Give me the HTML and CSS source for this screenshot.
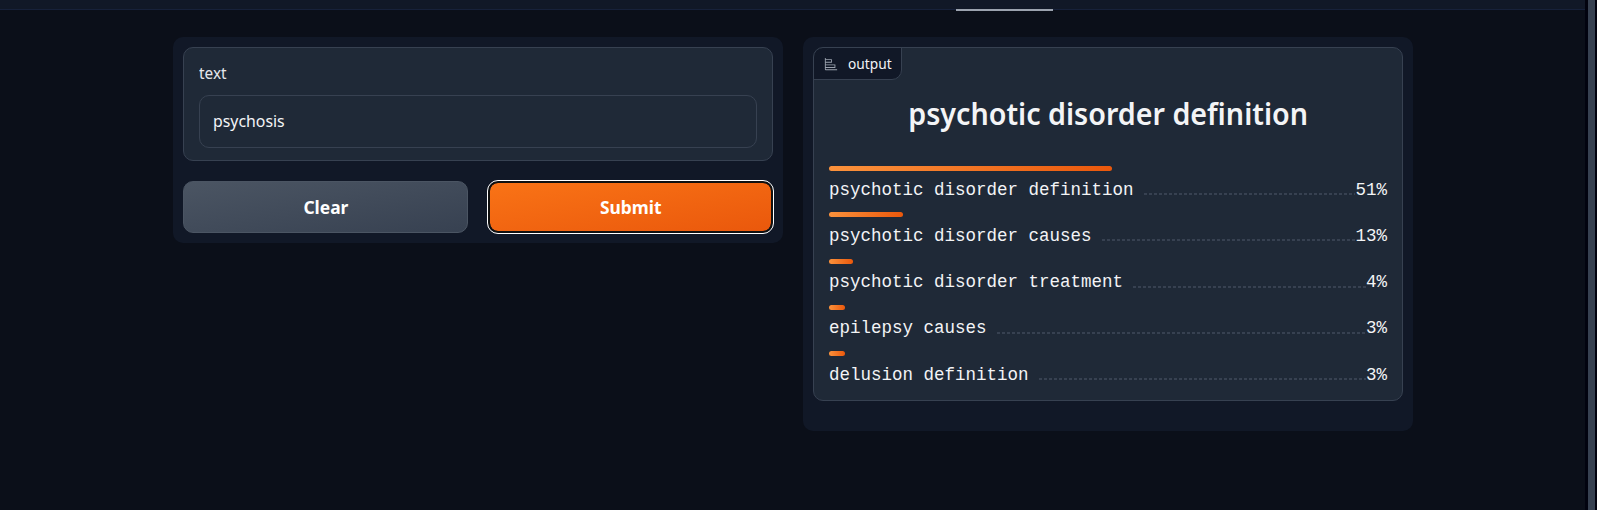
FILE: index.html
```
<!DOCTYPE html>
<html lang="en">
<head>
<meta charset="utf-8">
<title>Text classification</title>
<link rel="stylesheet" href="styles.css">
</head>
<body>
<div class="page">
  <header class="topbar"><span class="active-tab"></span></header>
  <main class="columns">
    <section class="panel">
      <div class="block field">
        <label class="label" for="text"><span class="fit">text</span></label>
        <div class="input" id="text"><span class="fit">psychosis</span></div>
      </div>
      <div class="actions">
        <button class="btn clear"><span class="fit">Clear</span></button>
        <button class="btn submit"><span class="fit">Submit</span></button>
      </div>
    </section>
    <section class="panel result">
      <div class="block output">
        <div class="tag">
          <svg class="icon" viewBox="0 0 32 32"><path fill="currentColor" d="M4 2H2v26a2 2 0 0 0 2 2h26v-2H4v-3h22v-8H4v-4h14V5H4Zm20 17v4H4v-4ZM16 7v4H4V7Z"/></svg>
          <span class="fit">output</span>
        </div>
        <h2 class="title"><span class="fit">psychotic disorder definition</span></h2>
        <div class="rows">
          <div class="row"><div class="bar" style="width:283px"></div><div class="line"><span>psychotic disorder definition</span><i class="dots"></i><span>51%</span></div></div>
          <div class="row"><div class="bar" style="width:74px"></div><div class="line"><span>psychotic disorder causes</span><i class="dots"></i><span>13%</span></div></div>
          <div class="row"><div class="bar" style="width:24px"></div><div class="line"><span>psychotic disorder treatment</span><i class="dots"></i><span>4%</span></div></div>
          <div class="row"><div class="bar" style="width:16px"></div><div class="line"><span>epilepsy causes</span><i class="dots"></i><span>3%</span></div></div>
          <div class="row"><div class="bar" style="width:16px"></div><div class="line"><span>delusion definition</span><i class="dots"></i><span>3%</span></div></div>
        </div>
      </div>
    </section>
  </main>
</div>
<div class="scrollbar"><div class="thumb"></div></div>
</body>
</html>
```
FILE: styles.css
```
* { box-sizing: border-box; }
body { margin: 0; height: 510px; overflow: hidden; display: flex; background: #0b0f19; color: #f3f4f6; font-family: "Noto Sans", sans-serif; }
.page { width: 1585px; }
.topbar { height: 10px; background: #111827; border-bottom: 1px solid #17213a; padding: 9px 0 0 956px; }
.active-tab { display: block; width: 97px; height: 2px; background: #9ca3af; }
.columns { display: grid; grid-template-columns: 610px 610px; gap: 20px; align-items: start; padding: 27px 0 0 173px; }
.panel { background: #111827; border-radius: 10px; padding: 10px; height: 206px; }
.result { height: 394px; }
.block { border: 1px solid #374151; border-radius: 10px; background: #1f2937; }
.fit { display: inline-block; white-space: nowrap; }
.field { height: 114px; padding: 14px 15px; }
.label { display: flex; align-items: center; height: 21px; font-size: 16px; color: #e5e7eb; }
.label .fit { transform: scaleX(.96); transform-origin: left; }
.input { display: flex; align-items: center; height: 53px; margin-top: 12px; border: 1px solid #374151; border-radius: 10px; padding: 0 13px 2px; font-size: 16px; }
.input .fit { transform: scaleX(.99); transform-origin: left; }
.actions { display: grid; grid-template-columns: 285px 285px; gap: 20px; margin-top: 20px; }
.btn { height: 52px; border-radius: 10px; padding: 0 0 2px; color: #fff; font: 700 18.5px "Noto Sans", sans-serif; }
.btn .fit { transform: scaleX(.94); }
.clear { border: 1px solid #4b5563; background: linear-gradient(to bottom right, #4b5563, #374151); }
.submit { border: 2px solid #101010; background: linear-gradient(to bottom right, #f97316, #ea580c) padding-box; outline: 1px solid #fff; }
.output { height: 354px; overflow: hidden; }
.tag { display: flex; align-items: center; gap: 10px; width: 89px; height: 33px; margin: -1px 0 0 -1px; padding-left: 10px; border: 1px solid #374151; border-radius: 10px 0 10px 0; background: #111827; font-size: 14px; }
.tag .fit { transform: scaleX(.98); transform-origin: left; }
.icon { width: 14px; height: 14px; color: #9ca3af; flex: none; }
.title { display: flex; justify-content: center; align-items: center; height: 70px; margin: 0; padding-bottom: 4px; font-size: 31px; font-weight: 600; }
.title .fit { transform: scaleX(.925); }
.rows { margin: 16px 15px 0; }
.row { height: 46.25px; }
.bar { height: 5px; border-radius: 3px; background: linear-gradient(to right, #fb923c, #ea580c); }
.line { display: flex; align-items: center; height: 37px; font: 17.5px "Liberation Mono", monospace; white-space: pre; }
.dots { flex: 1; height: 2px; margin: 9px 0 0 10px; background: repeating-linear-gradient(to right, #374151 0 3px, transparent 3px 5px); }
.scrollbar { width: 12px; background: #02030f; padding-left: 3px; }
.thumb { width: 7px; height: 510px; background: #374151; }
```
